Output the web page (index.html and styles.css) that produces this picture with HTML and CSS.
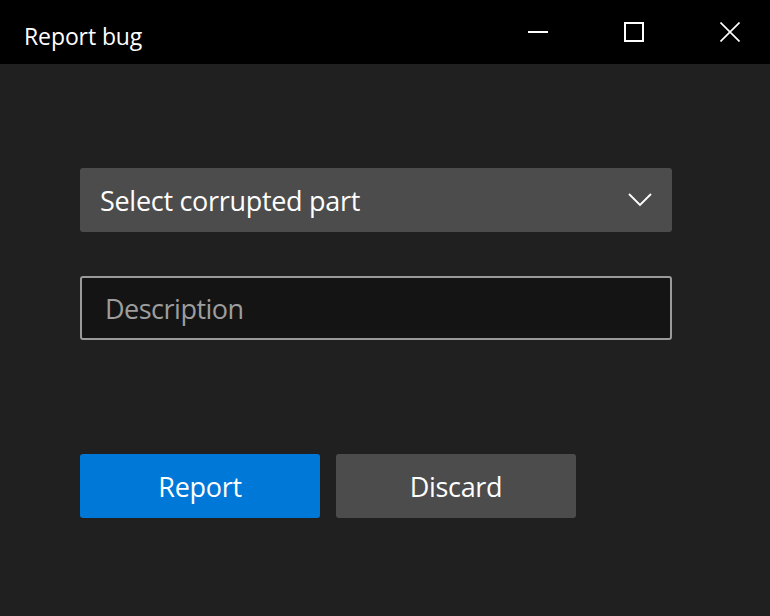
FILE: index.html
```html
<!DOCTYPE html>
<html>
<head>
<meta charset="utf-8">
<link rel="stylesheet" href="styles.css">
</head>
<body>
<div class="window">
  <header class="titlebar">
    <div class="title">Report bug</div>
    <div class="controls">
      <span class="ctl">
        <svg width="20" height="20" viewBox="0 0 20 20"><rect x="0" y="9" width="20" height="2" fill="#fff"/></svg>
      </span>
      <span class="ctl">
        <svg width="20" height="20" viewBox="0 0 20 20"><rect x="1" y="1" width="18" height="18" fill="none" stroke="#fff" stroke-width="2"/></svg>
      </span>
      <span class="ctl">
        <svg width="20" height="20" viewBox="0 0 20 20"><path d="M0.5 0.5 L19.5 19.5 M19.5 0.5 L0.5 19.5" stroke="#fff" stroke-width="1.6" fill="none"/></svg>
      </span>
    </div>
  </header>
  <main class="content">
    <div class="select">
      <span class="select-label">Select corrupted part</span>
      <svg class="chev" width="24" height="14" viewBox="0 0 24 14"><path d="M1 1 L12 12 L23 1" stroke="#fff" stroke-width="1.8" fill="none"/></svg>
    </div>
    <div class="input"><span class="placeholder">Description</span></div>
    <div class="buttons">
      <button class="btn primary">Report</button>
      <button class="btn secondary">Discard</button>
    </div>
  </main>
</div>
</body>
</html>
```
FILE: styles.css
```css
html, body {
  margin: 0;
  padding: 0;
  background: #202020;
}
body {
  width: 770px;
  height: 616px;
  overflow: hidden;
  font-family: "Open Sans", "Noto Sans", sans-serif;
  color: #fff;
}
.titlebar {
  height: 64px;
  background: #000;
  display: flex;
  align-items: center;
  justify-content: space-between;
}
.title {
  padding-left: 24px;
  font-size: 23px;
  letter-spacing: -0.1px;
  margin-top: 7px;
}
.controls {
  display: flex;
  align-self: flex-start;
  padding-top: 22px;
  padding-right: 30px;
  gap: 76px;
}
.ctl {
  display: block;
  width: 20px;
  height: 20px;
}
.ctl svg { display: block; }
.content {
  padding: 104px 0 0 80px;
  width: 592px;
}
.select {
  height: 64px;
  background: #4c4c4c;
  border-radius: 3px;
  display: flex;
  align-items: center;
  justify-content: space-between;
  padding: 0 20px;
  box-sizing: border-box;
}
.select-label {
  font-size: 27px;
  letter-spacing: -0.3px;
}
.chev { display: block; margin-right: 0; }
.input {
  margin-top: 44px;
  height: 64px;
  box-sizing: border-box;
  border: 2px solid #9a9a9a;
  border-radius: 3px;
  background: #141414;
  display: flex;
  align-items: center;
  padding-left: 23px;
}
.placeholder {
  color: #9d9d9d;
  font-size: 27px;
  letter-spacing: -0.5px;
}
.buttons {
  margin-top: 114px;
  display: flex;
  gap: 16px;
}
.btn {
  width: 240px;
  height: 64px;
  border: none;
  border-radius: 3px;
  color: #fff;
  font-family: "Open Sans", "Noto Sans", sans-serif;
  font-size: 27px;
  letter-spacing: -0.3px;
  padding: 0;
}
.primary { background: #0078d7; }
.secondary { background: #4c4c4c; }
```
